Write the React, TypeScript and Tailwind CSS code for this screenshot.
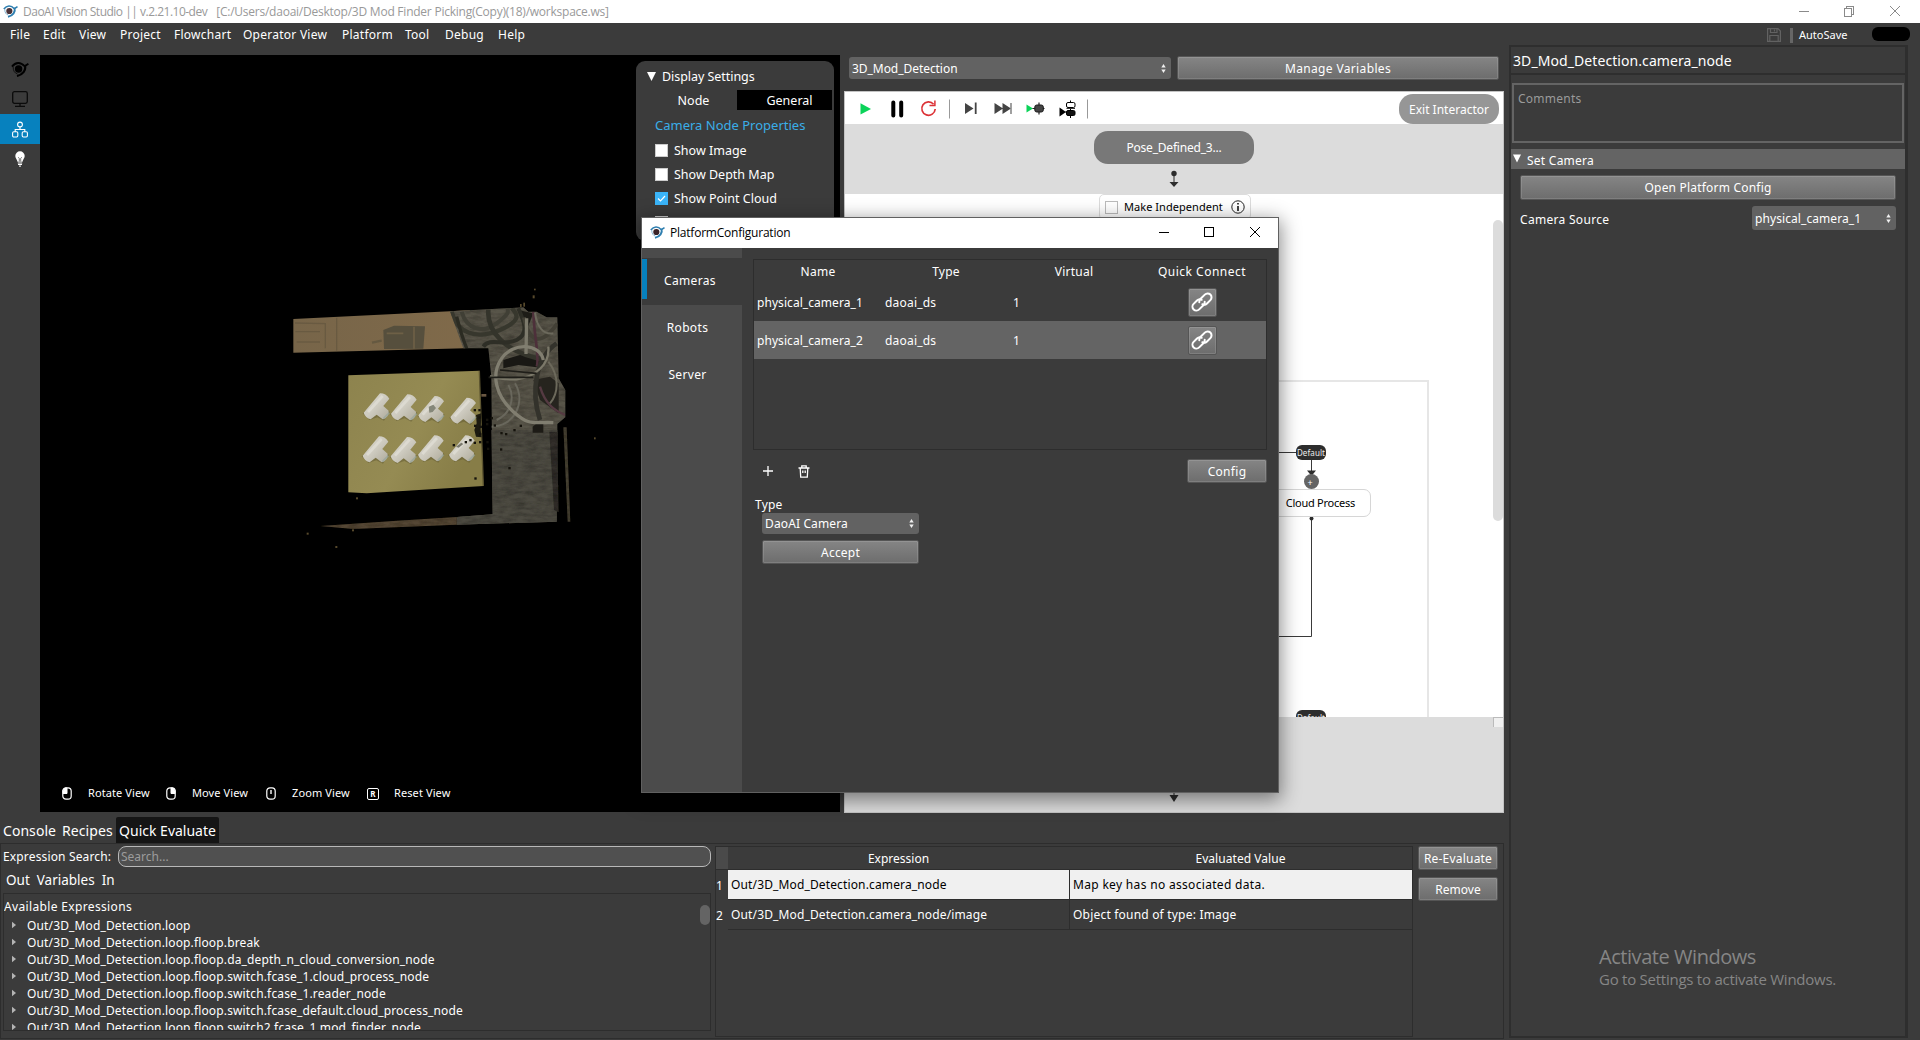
import type { ReactNode } from "react";

function Logo({ className, body, pupil }: { className: string; body: string; pupil: string }) {
  return (
    <svg viewBox="0 0 18 16" className={className} fill="none">
      <path d="M1 5.6C4.5 1 9.5.6 13.6 5.2L17.4 2.8" stroke={body} strokeWidth="1.9" />
      <path d="M13.8 4.2C15.4 9 12 13.6 6 15" stroke={body} strokeWidth="2.200" />
      <path d="M2.2 6C2 9.500 3.600 12.200 6.500 13" stroke={body} strokeWidth="1" opacity="0.700" />
      <circle cx="7.600" cy="8" r="3.700" fill={pupil} />
    </svg>
  );
}

function Button({ className, children }: { className: string; children: ReactNode }) {
  return (
    <button
      className={
        "flex shrink-0 items-center justify-center rounded-[2px] border border-[#555] bg-linear-to-b from-[#858585] to-[#6d6d6d] leading-none shadow-[inset_0_0_0_1px_rgba(255,255,255,0.12)] " +
        className
      }
    >
      {children}
    </button>
  );
}

function Spin() {
  return (
    <svg viewBox="0 0 5 9" className="h-[9px] w-[5px] shrink-0" fill="#f0f0f0">
      <path d="M2.5 0L4.700 3.500H.3z" />
      <path d="M2.500 9L4.700 5.500H.3z" />
    </svg>
  );
}

function Select({ className, children }: { className: string; children: ReactNode }) {
  return (
    <div className={"flex shrink-0 items-center justify-between rounded-[3px] bg-[#626262] pl-[3px] leading-none " + className}>
      <span className="pt-[1px]">{children}</span>
      <Spin />
    </div>
  );
}

const menus: [string, string][] = [
  ["File", "w-[33px]"],
  ["Edit", "w-[36px]"],
  ["View", "w-[41px]"],
  ["Project", "w-[54px]"],
  ["Flowchart", "w-[69px]"],
  ["Operator View", "w-[99px]"],
  ["Platform", "w-[63px]"],
  ["Tool", "w-[40px]"],
  ["Debug", "w-[53px]"],
  ["Help", "w-[40px]"],
];

function TitleBar() {
  return (
    <div className="flex h-[23px] shrink-0 items-center bg-white font-['Open_Sans',sans-serif] text-[12px] text-[#999]">
      <Logo className="ml-[3px] mb-[2px] h-[14px] w-[15px]" body="#2f7fb0" pupil="#4a3338" />
      <span className="ml-[5px] whitespace-pre tracking-[-0.500px]">DaoAI Vision Studio || v.2.21.10-dev</span>
      <span className="ml-[9px] whitespace-pre tracking-[-0.235px]">[C:/Users/daoai/Desktop/3D Mod Finder Picking(Copy)(18)/workspace.ws]</span>
      <svg viewBox="0 0 103 12" className="mr-[19px] mb-[2px] ml-auto h-[12px] w-[103px]" fill="none" stroke="#8a8a8a" shapeRendering="crispEdges">
        <path d="M1 6.500H11" />
        <path d="M46.500 3.500h7v8h-7zM48.500 3.500v-2h7v8h-2" />
        <path d="M92 1L102 11M102 1L92 11" shapeRendering="auto" />
      </svg>
    </div>
  );
}

function MenuBar() {
  return (
    <div className="flex h-[22px] shrink-0 items-center pt-[2px] pl-[10px] text-[12px] leading-[20px]">
      {menus.map(([m, w]) => (
        <span key={m} className={"shrink-0 whitespace-nowrap tracking-[0.250px] " + w}>{m}</span>
      ))}
      <svg viewBox="0 0 14 14" className="ml-auto h-[14px] w-[14px]" fill="none" stroke="#626262" strokeWidth="1.200">
        <path d="M.6.600H11L13.400 3V13.400H.6z" />
        <path d="M3.500.600V4.500H10V.6M2.800 13.400V7.500H11.200V13.400M7.500 1.500V3.500" />
      </svg>
      <div className="ml-[9px] h-[15px] w-[3px] bg-[#666]" />
      <span className="ml-[6px] w-[73px] text-[11px]">AutoSave</span>
      <div className="mr-[10px] mb-[2px] h-[14px] w-[38px] rounded-[6px] bg-black" />
    </div>
  );
}

function SideBar() {
  return (
    <div className="flex w-[40px] shrink-0 flex-col pt-[9px]">
      <div className="flex h-[30px] items-center justify-center">
        <Logo className="h-[16px] w-[18px]" body="#000" pupil="#000" />
      </div>
      <div className="flex h-[30px] items-center justify-center">
        <svg viewBox="0 0 16 16" className="h-[16px] w-[16px]" fill="none" stroke="#0b0b0b" strokeWidth="1.300">
          <rect x="0.700" y="0.700" width="14.600" height="11.600" rx="1.800" />
          <path d="M8 12.300V15M3 15.300H13" />
        </svg>
      </div>
      <div className="flex h-[30px] items-center justify-center bg-[#0781be]">
        <svg viewBox="0 0 16 16" className="h-[17px] w-[16px]" fill="none" stroke="#fff" strokeWidth="1.100">
          <circle cx="8" cy="3" r="2.400" />
          <path d="M8 5.400V8M3.200 10.500V8H12.800V10.500" />
          <rect x="0.600" y="10.300" width="5.200" height="5.200" rx="1.200" />
          <rect x="10.200" y="10.300" width="5.200" height="5.200" rx="1.200" />
        </svg>
      </div>
      <div className="flex h-[30px] items-center justify-center">
        <svg viewBox="0 0 10 16" className="h-[16px] w-[10px]">
          <path d="M5 .3a4.700 4.700 0 0 1 4.700 4.700C9.700 7.400 7.900 8.300 7.500 10.800H2.500C2.100 8.300.3 7.400.3 5A4.700 4.700 0 0 1 5 .3z" fill="#fff" />
          <path d="M3.300 6.200L4.300 7.500V10.500M6.700 6.200L5.700 7.500V10.500" stroke="#3b3b3b" strokeWidth="0.700" fill="none" />
          <path d="M2.800 12H7.200M3 13.500H7M4 15.100H6" stroke="#fff" strokeWidth="1" />
        </svg>
      </div>
    </div>
  );
}

const tees: [number, number][] = [
  [320, 380], [402, 383], [484, 388], [580, 393],
  [317, 509], [401, 511], [483, 506], [576, 506],
];

const specks: [number, number][] = [
  [628, 390], [614, 390], [628, 412], [615, 437], [632, 440], [630, 462], [651, 419], [651, 432],
  [652, 486], [654, 506], [665, 414], [674, 436], [694, 459], [708, 462], [733, 450], [752, 437], [693, 508], [718, 564],
  [551, 495], [587, 486], [601, 480], [614, 488], [630, 486], [616, 595],
];

function PointCloud() {
  return (
    <svg viewBox="0 0 1020 840" className="mt-[225px] ml-[230px] h-[280px] w-[340px]">
      <defs>
        <filter id="grain" x="0" y="0" width="100%" height="100%">
          <feTurbulence type="fractalNoise" baseFrequency="0.030 0.090" numOctaves="4" seed="4" result="n" />
          <feColorMatrix in="n" type="matrix" values="0 0 0 0 0  0 0 0 0 0  0 0 0 0 0  0 0 0 0.800 -0.260" result="d" />
          <feComposite in="d" in2="SourceGraphic" operator="in" result="c" />
          <feMerge>
            <feMergeNode in="SourceGraphic" />
            <feMergeNode in="c" />
          </feMerge>
        </filter>
        <linearGradient id="wall" x1="0" x2="1">
          <stop offset="0" stopColor="#776549" />
          <stop offset="1" stopColor="#806a4a" />
        </linearGradient>
        <linearGradient id="board" x1="0" x2="1" y2="0.500">
          <stop offset="0" stopColor="#8d834e" />
          <stop offset="0.600" stopColor="#958b53" />
          <stop offset="1" stopColor="#877d47" />
        </linearGradient>
        <linearGradient id="tee" x1="0" y1="0" x2="1" y2="1">
          <stop offset="0" stopColor="#d9d6cb" />
          <stop offset="0.500" stopColor="#cecbc0" />
          <stop offset="1" stopColor="#aeaa9a" />
        </linearGradient>
        <clipPath id="clutter">
          <path d="M540 94L760 82L775 95L800 95L830 112H862L866 295L886 330V412L860 435L850 480L655 480V205H580z" />
        </clipPath>
      </defs>
      <path d="M70 117L540 94L600 90L585 205L70 218z" fill="url(#wall)" />
      <path d="M200 113V212M75 129L166 131V205M76 155H150M80 186H150" stroke="#62563f" strokeWidth="4" fill="none" opacity="0.700" />
      <path d="M340 150L372 137L465 139L460 206L342 207z" fill="#564f3d" />
      <path d="M350 160H400M432 140V206" stroke="#6e6046" strokeWidth="5" fill="none" />
      <path d="M306 188L335 182" stroke="#655941" strokeWidth="7" />
      <g filter="url(#grain)">
        <path d="M540 94L760 82L775 95L800 95L830 112H862L866 295L886 330V412L862 432L860 725L560 734V711L668 703L664 290L655 205H580z" fill="#58554a" />
        <path d="M664 450H862L860 725L560 734V711L668 703z" fill="#4e4c43" />
        <path d="M838 455H862L866 697L852 690z" fill="#302f29" />
        <path d="M150 738L380 722L560 711V734L250 747z" fill="#544735" />
        <path d="M880 442H890L901 725H893z" fill="#453f32" />
      </g>
      <g clipPath="url(#clutter)" fill="none">
        <path d="M700 240L760 222L815 245L800 262L745 255L700 265z" fill="#191814" />
        <path d="M790 300L840 290L866 310V400L810 360z" fill="#26241e" />
        <path d="M745 90L790 100L770 150z" fill="#1d1c17" />
        <path d="M800 430H820V458H788V440z" fill="#1d1b16" />
        <path d="M545 95C560 160 620 180 690 150S740 100 725 84" stroke="#37372d" strokeWidth="13" />
        <path d="M575 95C590 150 640 160 680 130S715 95 712 84" stroke="#403f35" strokeWidth="12" />
        <path d="M655 88C650 150 700 220 830 240" stroke="#34342b" strokeWidth="14" />
        <path d="M640 200C660 170 700 200 740 180S760 120 745 85" stroke="#2e2e26" strokeWidth="12" />
        <path d="M560 110C570 150 580 180 590 205" stroke="#2b2b22" strokeWidth="10" />
        <path d="M762 112C780 200 820 190 862 130" stroke="#434036" strokeWidth="12" />
        <path d="M790 95C790 150 810 240 800 260" stroke="#4d303a" strokeWidth="8" />
        <path d="M810 320C825 370 850 390 886 405" stroke="#553a42" strokeWidth="7" />
        <path d="M770 115L768 222" stroke="#7d7a6c" strokeWidth="10" />
        <path d="M795 98C800 140 820 165 850 160" stroke="#6c695c" strokeWidth="6" />
        <path d="M860 190C800 230 780 330 810 420" stroke="#33322b" strokeWidth="14" />
        <path d="M665 440C730 440 770 370 735 310M680 420C725 400 735 350 715 315" stroke="#69675c" strokeWidth="6" />
        <path d="M835 200C840 250 800 290 740 298C700 300 680 295 660 288" stroke="#7b7869" strokeWidth="7" />
        <path d="M820 240C810 190 730 185 695 235S680 350 730 395S790 425 850 428" stroke="#817e70" strokeWidth="10" />
        <path d="M835 245C870 290 865 340 840 370" stroke="#6c695b" strokeWidth="6" />
        <path d="M655 292H790M690 270L800 280" stroke="#1f1e19" strokeWidth="5" />
      </g>
      <path d="M235 286L628 272L640 618L290 640L235 637z" fill="url(#board)" />
      <path d="M628 272L640 618" stroke="#5d5530" strokeWidth="4" />
      <path d="M634 342L649 342V350H634z" fill="#6a5742" />
      <path d="M618 405L634 400L632 450L635 472L618 470L613 450L620 430z" fill="#1c1a10" />
      {tees.map(([x, y]) => (
        <g key={x + "-" + y} transform={"translate(" + x + " " + y + ")"}>
          <path d="M-42 20L-22 40L2 32L22 42L40 16L20 0L30 -30L6 -24z" fill="#5f5730" opacity="0.500" />
          <path d="M-39 18L10 -40Q28 -40 38 -24L20 -2L36 12Q38 32 18 38L0 24L-18 38Q-34 34 -39 18z" fill="url(#tee)" />
          <path d="M-26 16L18 -32" stroke="#e6e4dc" strokeWidth="8" opacity="0.600" />
          <path d="M20 36L38 18" stroke="#97a59b" strokeWidth="5" opacity="0.700" />
        </g>
      ))}
      <path d="M476 380L490 374L498 384L488 396L478 398z" fill="#858779" />
      <path d="M558 500L574 488L580 492L566 503z" fill="#77776b" />
      {specks.map(([x, y]) => (
        <rect key={x + "." + y} x={x - 3} y={y - 3} width="7" height="7" fill="#15130c" />
      ))}
      <g fill="#57492c">
        <rect x="110" y="758" width="6" height="6" />
        <rect x="196" y="798" width="6" height="6" />
        <rect x="258" y="652" width="6" height="6" />
        <rect x="246" y="748" width="6" height="6" />
        <rect x="792" y="26" width="5" height="5" />
        <rect x="788" y="46" width="6" height="9" />
        <rect x="750" y="72" width="5" height="9" />
        <rect x="760" y="68" width="5" height="12" />
        <rect x="972" y="472" width="5" height="6" />
      </g>
    </svg>
  );
}

function Mouse({ button }: { button: "left" | "right" | "wheel" }) {
  return (
    <svg viewBox="0 0 10 13" className="h-[13px] w-[10px]" fill="none" stroke="#fff">
      <rect x="0.800" y="0.800" width="8.400" height="11.400" rx="3.200" strokeWidth="1.200" />
      {button === "left" && <path d="M1 6.500V3.500L3 1H5V6.500z" fill="#fff" />}
      {button === "right" && <path d="M9 6.500V3.500L7 1H5V6.500z" fill="#fff" />}
      {button === "wheel" && <path d="M5 3V7" strokeWidth="1.400" />}
    </svg>
  );
}

function Check({ label, on }: { label: string; on?: boolean }) {
  return (
    <div className="flex h-[24px] shrink-0 items-center pl-[19px]">
      <div className={"mb-[2px] flex h-[13px] w-[13px] items-center justify-center " + (on ? "bg-[#3ab4f8]" : "border border-[#ccc] bg-white")}>
        {on && (
          <svg viewBox="0 0 9 7" className="h-[7px] w-[9px]" fill="none" stroke="#fff" strokeWidth="1.200">
            <path d="M1 3.500L3.500 6L8 1" />
          </svg>
        )}
      </div>
      <span className="ml-[6px]">{label}</span>
    </div>
  );
}

function Viewport() {
  return (
    <div className="relative flex h-[757px] w-[800px] shrink-0 flex-col bg-black">
      <PointCloud />
      <div className="mt-auto flex h-[36px] items-center pb-[1px] text-[11px] tracking-[0.100px]">
        <div className="ml-[22px] w-[26px]"><Mouse button="left" /></div>
        <span className="w-[78px]">Rotate View</span>
        <div className="w-[26px]"><Mouse button="right" /></div>
        <span className="w-[74px]">Move View</span>
        <div className="w-[26px]"><Mouse button="wheel" /></div>
        <span className="w-[75px]">Zoom View</span>
        <div className="w-[27px]">
          <div className="flex h-[12px] w-[12px] items-center justify-center rounded-[2px] border border-white text-[8px] font-bold leading-none">R</div>
        </div>
        <span>Reset View</span>
      </div>
      <div className="absolute top-[6px] left-[596px] flex h-[180px] w-[198px] flex-col overflow-hidden rounded-[9px] bg-[#3b3b3b] text-[12.500px]">
        <div className="mt-[3px] flex h-[25px] items-center pt-[1px] pl-[11px]">
          <svg viewBox="0 0 9 9" className="mb-[1px] h-[9px] w-[9px]" fill="#fff"><path d="M0 0H9L4.500 9z" /></svg>
          <span className="ml-[6px] tracking-[-0.050px]">Display Settings</span>
        </div>
        <div className="mt-[1px] flex h-[20px] items-center">
          <span className="flex w-[101px] justify-center pt-[2px] pl-[14px]">Node</span>
          <span className="flex h-[20px] w-[95px] items-center justify-center bg-black pt-[2px] pl-[10px]">General</span>
        </div>
        <span className="mt-[3px] h-[24px] pl-[19px] text-[13px] leading-[24px] text-[#3aaee8]">Camera Node Properties</span>
        <div className="flex flex-col pt-[2px]">
          <Check label="Show Image" />
          <Check label="Show Depth Map" />
          <Check label="Show Point Cloud" on />
          <Check label="Show Bounding Box" />
        </div>
      </div>
    </div>
  );
}

function Toolbar() {
  return (
    <div className="flex h-[32px] shrink-0 items-center bg-white">
      <svg viewBox="0 0 250 32" className="mb-[1px] h-[32px] w-[250px]" fill="none">
        <path d="M15.500 11.300L26 17L15.500 22.500z" fill="#0bd359" />
        <path d="M48.300 10.500V23.500M56.200 10.500V23.500" stroke="#000" strokeWidth="4" strokeLinecap="round" />
        <path d="M88.600 12.200A6.700 6.700 0 1 0 90.200 17" stroke="#dc3236" strokeWidth="1.700" />
        <path d="M89.900 8.500V13.500H84.500" stroke="#dc3236" strokeWidth="1.500" />
        <path d="M104.500 7.500V26.500M242.500 7.500V26.500" stroke="#999" />
        <path d="M120 11V22L128.500 16.500z" fill="#444" />
        <path d="M130.700 10.500V22" stroke="#444" strokeWidth="1.800" />
        <path d="M149.500 11V22L158 16.500zM157.500 11V22L166 16.500z" fill="#444" />
        <path d="M166 11V22" stroke="#777" strokeWidth="1.400" />
        <path d="M181.500 12.500V20.500L188 16.500z" fill="#0bd359" />
        <path d="M187.500 16.500H199.500M194 10.500V22.500" stroke="#222" strokeWidth="1.200" />
        <rect x="189.800" y="13" width="8.500" height="7" rx="2" fill="#444" stroke="#1a1a1a" />
        <path d="M214.500 15.500V24.500L221 20z" fill="#000" />
        <path d="M225.500 8.500V26" stroke="#000" />
        <rect x="221.500" y="10.500" width="8.500" height="5" rx="1.500" fill="#fff" stroke="#000" />
        <path d="M219.500 20H224M221.500 16.500H230" stroke="#333" />
        <rect x="221.500" y="18.500" width="8.500" height="5" rx="1.500" fill="#111" stroke="#000" />
      </svg>
      <div className="mt-[1px] mr-[4px] ml-auto flex h-[30px] w-[100px] items-center justify-center rounded-[14px] bg-[#969696] pt-[3px] text-[12px] text-white">
        Exit Interactor
      </div>
    </div>
  );
}

function Flowchart() {
  return (
    <div className="flex h-[722px] w-[660px] shrink-0 flex-col overflow-hidden border border-[#c3c3c3] bg-[#dcdcdc] text-[#111]">
      <Toolbar />
      <div className="flex h-[70px] shrink-0 flex-col items-center pt-[7px]">
        <div className="flex h-[33px] w-[160px] items-center justify-center rounded-[14px] bg-[#787878] pt-[1px] text-[12px] tracking-[-0.200px] text-white">Pose_Defined_3...</div>
        <svg viewBox="0 0 10 18" className="mt-[6px] h-[18px] w-[10px]" fill="#2d2d2d">
          <circle cx="5" cy="3.500" r="2.700" />
          <path d="M4.500 3H5.500V13H4.500zM.5 12H9.500L5 17z" />
        </svg>
      </div>
      <div className="relative h-[523px] shrink-0 overflow-hidden bg-white">
        <div className="absolute top-[0px] left-[254px] flex h-[26px] w-[152px] items-center rounded-[5px] border border-[#dcdcdc] bg-white pl-[5px] text-[11px]">
          <div className="h-[13px] w-[13px] border border-[#bbb]" />
          <span className="ml-[6px] w-[107px] whitespace-nowrap tracking-[0.050px] text-black">Make Independent</span>
          <svg viewBox="0 0 14 14" className="h-[14px] w-[14px] shrink-0" fill="none" stroke="#222">
            <circle cx="7" cy="7" r="6.200" />
            <path d="M7 3V4.600M7 6V11" strokeWidth="1.700" />
          </svg>
        </div>
        <div className="absolute top-[186px] left-[100px] h-[400px] w-[484px] border-2 border-[#e6e6e6]" />
        <svg viewBox="0 0 200 280" className="absolute top-[244px] left-[350px] h-[280px] w-[200px]" fill="none" stroke="#3a3a3a">
          <path d="M0 14.500H102M116.500 22V38M116.500 81V198.500H0" />
          <path d="M112 32.500H121L116.500 38z" fill="#2d2d2d" stroke="none" />
          <circle cx="116.500" cy="80.500" r="2" fill="#2d2d2d" stroke="none" />
        </svg>
        <div className="absolute top-[251px] left-[451px] flex h-[15px] w-[30px] items-center justify-center rounded-[6px] bg-[#2d2d2d] pt-[1px] text-[8px] tracking-[0.100px] text-[#eee]">Default</div>
        <div className="absolute top-[280px] left-[459px] flex h-[15px] w-[15px] items-center justify-center rounded-full bg-[#646464] pt-[1px] pr-[3px] text-[9px] leading-none text-white">+</div>
        <div className="absolute top-[295px] left-[370px] flex h-[28px] w-[156px] items-center justify-end rounded-[7px] border border-[#d6d6d6] bg-white pr-[15px] text-[11px] tracking-[-0.250px] text-black">Cloud Process</div>
        <div className="absolute top-[516px] left-[451px] flex h-[15px] w-[30px] items-center justify-center rounded-[6px] bg-[#2d2d2d] text-[8px] tracking-[0.100px] text-[#eee]">Default</div>
        <div className="absolute top-[26px] right-[0px] h-[301px] w-[10px] rounded-[5px] bg-[#dcdcdc]" />
      </div>
      <div className="flex h-[10px] shrink-0 justify-end">
        <div className="h-[10px] w-[10px] border-t border-l border-[#bbb] bg-[#f0f0f0]" />
      </div>
      <div className="mt-auto flex justify-center">
        <svg viewBox="0 0 10 40" className="mb-[9px] h-[40px] w-[10px]" fill="#2d2d2d">
          <path d="M4.500 0H5.500V34H4.500zM.5 32H9.500L5 39z" />
        </svg>
      </div>
    </div>
  );
}

function CenterColumn() {
  return (
    <div className="ml-[4px] flex w-[665px] shrink-0 flex-col text-[12px]">
      <div className="flex h-[36px] shrink-0 items-start pt-[1px] pl-[5px]">
        <Select className="mt-[1px] h-[22px] w-[322px] pr-[5px]"><span className="tracking-[-0.050px]">3D_Mod_Detection</span></Select>
        <Button className="ml-[6px] h-[24px] w-[322px]"><span className="pt-[1px] tracking-[0.350px]">Manage Variables</span></Button>
      </div>
      <Flowchart />
    </div>
  );
}

const expressions = [
  "Out/3D_Mod_Detection.loop",
  "Out/3D_Mod_Detection.loop.floop.break",
  "Out/3D_Mod_Detection.loop.floop.da_depth_n_cloud_conversion_node",
  "Out/3D_Mod_Detection.loop.floop.switch.fcase_1.cloud_process_node",
  "Out/3D_Mod_Detection.loop.floop.switch.fcase_1.reader_node",
  "Out/3D_Mod_Detection.loop.floop.switch.fcase_default.cloud_process_node",
  "Out/3D_Mod_Detection.loop.floop.switch2.fcase_1.mod_finder_node",
];

function BottomPanel() {
  return (
    <div className="flex h-[227px] w-[1509px] shrink-0 flex-col pt-[4px]">
      <div className="flex h-[26px] shrink-0 items-center text-[14px]">
        <span className="ml-[3px] w-[59px] tracking-[0.050px]">Console</span>
        <span className="w-[54px] tracking-[0.100px]">Recipes</span>
        <span className="flex h-[26px] w-[103px] items-center justify-center rounded-t-[2px] bg-[#151515]">Quick Evaluate</span>
      </div>
      <div className="flex h-[196px] w-[1504px] border border-[#2d2d2d] text-[12px]">
        <div className="flex w-[711px] shrink-0 flex-col pl-[2px]">
          <div className="mt-[2px] flex h-[21px] shrink-0 items-center">
            <span className="w-[115px] pt-[1px] tracking-[0.150px]">Expression Search:</span>
            <div className="flex h-[21px] w-[593px] items-center rounded-[8px] border border-[#b8b8b8] bg-[#505050] pl-[2px] text-[#9c9c9c]">Search...</div>
          </div>
          <div className="flex h-[26px] shrink-0 items-center gap-[7px] pt-[1px] pl-[3px] text-[13.500px]">
            <span>Out</span>
            <span>Variables</span>
            <span>In</span>
          </div>
          <div className="flex h-[138px] w-[708px] shrink-0 justify-between overflow-hidden border border-[#2d2d2d]">
            <div className="flex flex-col pt-[3px]">
              <span className="flex h-[20px] shrink-0 items-center tracking-[0.350px]">Available Expressions</span>
              {expressions.map((e) => (
                <div key={e} className="flex h-[17px] shrink-0 items-center pl-[8px]">
                  <svg viewBox="0 0 5 8" className="mb-[2px] h-[8px] w-[4px]" fill="#b4b4b4"><path d="M0 0L5 4L0 8z" /></svg>
                  <span className="ml-[11px] leading-none tracking-[0.140px]">{e}</span>
                </div>
              ))}
            </div>
            <div className="mt-[11px] h-[20px] w-[10px] rounded-[5px] bg-[#646464]" />
          </div>
        </div>
        <div className="mt-[2px] ml-[3px] flex h-[191px] w-[698px] shrink-0 flex-col border border-[#2d2d2d]">
          <div className="flex h-[23px] shrink-0 items-center border-b border-[#2d2d2d]">
            <div className="h-[22px] w-[12px] bg-[#4a4a4a]" />
            <span className="flex w-[342px] justify-center pt-[2px] pr-[1px]">Expression</span>
            <span className="flex w-[341px] justify-center pt-[2px] tracking-[0.050px]">Evaluated Value</span>
          </div>
          {[
            ["Out/3D_Mod_Detection.camera_node", "Map key has no associated data."],
            ["Out/3D_Mod_Detection.camera_node/image", "Object found of type: Image"],
          ].map(([a, b], i) => (
            <div key={a} className="flex h-[30px] shrink-0 items-stretch">
              <span className="flex w-[12px] items-center pt-[2px]">{i + 1}</span>
              <div className={"flex flex-1 border-b border-[#2d2d2d] tracking-[0.140px] " + (i === 0 ? "bg-[#f0f0f0] text-black" : "")}>
                <span className="flex w-[342px] items-center border-r border-[#2d2d2d] pt-[1px] pl-[3px]">{a}</span>
                <span className={"flex flex-1 items-center pt-[1px] pl-[3px] " + (i === 0 ? "tracking-[0.320px]" : "tracking-[0.200px]")}>{b}</span>
              </div>
            </div>
          ))}
        </div>
        <div className="flex flex-col gap-[7px] pt-[2px] pl-[5px]">
          <Button className="h-[24px] w-[80px]"><span className="pt-[1px] tracking-[0.200px]">Re-Evaluate</span></Button>
          <Button className="h-[24px] w-[80px]"><span className="pt-[1px]">Remove</span></Button>
        </div>
      </div>
    </div>
  );
}

function RightPanel() {
  return (
    <div className="flex h-[995px] w-[411px] shrink-0 pr-[12px]">
      <div className="flex h-[993px] w-[399px] flex-col border-2 border-r-3 border-[#2e2e2e] text-[12px]">
        <div className="flex h-[28px] shrink-0 items-center border-b-2 border-[#2e2e2e] pt-[1px] pl-[2px] text-[14px] tracking-[0.080px]">3D_Mod_Detection.camera_node</div>
        <div className="mt-[8px] ml-[1px] h-[60px] w-[392px] shrink-0 border-2 border-[#646464] pt-[5px] pl-[4px] leading-[18px] tracking-[0.250px] text-[#9a9a9a]">Comments</div>
        <div className="mt-[6px] flex h-[20px] w-[394px] shrink-0 items-center bg-[#646464] pl-[2px]">
          <svg viewBox="0 0 9 9" className="mb-[1px] h-[9px] w-[8px]" fill="#fff"><path d="M0 0H9L4.500 9z" /></svg>
          <span className="ml-[6px] pt-[3px] tracking-[0.250px]">Set Camera</span>
        </div>
        <Button className="mt-[6px] ml-[9px] h-[25px] w-[376px]"><span className="pt-[1px] tracking-[0.200px]">Open Platform Config</span></Button>
        <div className="mt-[6px] flex h-[24px] shrink-0 items-center pl-[9px]">
          <span className="w-[232px] pt-[3px] tracking-[0.300px]">Camera Source</span>
          <Select className="h-[24px] w-[144px] pr-[5px]"><span className="tracking-[0.080px]">physical_camera_1</span></Select>
        </div>
        <div className="mt-auto mb-[46px] ml-[88px] flex flex-col font-['Open_Sans',sans-serif] text-[#868686]">
          <span className="text-[20px] leading-[24px] tracking-[-0.450px]">Activate Windows</span>
          <span className="text-[15px] leading-[21px] tracking-[-0.250px]">Go to Settings to activate Windows.</span>
        </div>
      </div>
    </div>
  );
}

function LinkIcon() {
  return (
    <svg viewBox="0 0 24 24" className="h-[24px] w-[24px] shrink-0" fill="none" stroke="#fff" strokeWidth="2" strokeLinecap="round">
      <path d="M9.300 12.200C9 10.800 9.500 9.900 10.400 9L14.800 4.600A3.900 3.900 0 0 1 20.400 10.100L17 13.500C15.600 14.900 13.800 15 12.300 14.200" />
      <path d="M14.700 11.800C15 13.200 14.500 14.100 13.600 15L9.200 19.400A3.900 3.900 0 0 1 3.600 13.900L7 10.500C8.400 9.100 10.200 9 11.700 9.800" />
    </svg>
  );
}

function Dialog() {
  return (
    <div className="absolute top-[217px] left-[641px] flex h-[576px] w-[638px] flex-col border border-[#606060] bg-[#3b3b3b] text-[12px] shadow-[0_5px_18px_2px_rgba(0,0,0,0.450)]">
      <div className="flex h-[30px] shrink-0 items-center bg-white text-black">
        <Logo className="mb-[2px] ml-[8px] h-[14px] w-[15px]" body="#2f7fb0" pupil="#3a2226" />
        <span className="ml-[5px] font-['Open_Sans',sans-serif] tracking-[-0.220px]">PlatformConfiguration</span>
        <svg viewBox="0 0 102 12" className="mr-[17px] mb-[2px] ml-auto h-[12px] w-[102px]" fill="none" stroke="#000">
          <path d="M0 6.500H10M45.500 1.500h9v9h-9z" shapeRendering="crispEdges" />
          <path d="M91 1L101 11M101 1L91 11" />
        </svg>
      </div>
      <div className="flex min-h-0 flex-1">
        <div className="flex w-[100px] shrink-0 flex-col bg-[#4b4b4b] pt-[10px] tracking-[0.350px]">
          <div className="flex h-[47px] bg-[#3b3b3b]">
            <div className="mt-[1px] h-[40px] w-[5px] bg-[#0781be]" />
            <span className="flex h-[47px] w-[86px] items-center justify-center pb-[2px]">Cameras</span>
          </div>
          <span className="flex h-[47px] w-[91px] items-center justify-center pb-[2px]">Robots</span>
          <span className="flex h-[47px] w-[91px] items-center justify-center pb-[2px]">Server</span>
        </div>
        <div className="flex flex-1 flex-col pt-[11px] pl-[11px]">
          <div className="flex h-[191px] w-[514px] flex-col border border-[#2d2d2d]">
            <div className="grid h-[23px] shrink-0 grid-cols-4 items-center text-center tracking-[0.250px]">
              <span className="pt-[1px]">Name</span>
              <span className="pt-[1px]">Type</span>
              <span className="pt-[1px]">Virtual</span>
              <span className="pt-[1px] tracking-[0.500px]">Quick Connect</span>
            </div>
            {["physical_camera_1", "physical_camera_2"].map((n, i) => (
              <div key={n} className={"grid h-[38px] shrink-0 grid-cols-4 items-center " + (i === 1 ? "bg-[#646464]" : "")}>
                <span className="pt-[2px] pl-[3px] tracking-[0.060px]">{n}</span>
                <span className="pt-[2px] pl-[3px] tracking-[0.200px]">daoai_ds</span>
                <span className="pt-[2px] pl-[3px]">1</span>
                <div className="flex justify-center">
                  <Button className="h-[29px] w-[29px]"><LinkIcon /></Button>
                </div>
              </div>
            ))}
          </div>
          <div className="mt-[9px] flex h-[24px] items-center pl-[10px]">
            <svg viewBox="0 0 10 10" className="h-[10px] w-[10px]" stroke="#fff" strokeWidth="1.300"><path d="M5 0V10M0 5H10" /></svg>
            <svg viewBox="0 0 12 13" className="ml-[25px] h-[13px] w-[12px]" fill="none" stroke="#fff" strokeWidth="1.300">
              <path d="M.5 3H11.500M3.800 3V.900H8.200V3M2.200 3L2.700 12.200H9.300L9.800 3M4.800 5.500V8M7.200 5.500V8" />
            </svg>
            <Button className="ml-auto mr-[11px] h-[24px] w-[80px]"><span className="pt-[1px] tracking-[0.300px]">Config</span></Button>
          </div>
          <span className="mt-[13px] h-[18px] pl-[2px] leading-[18px] tracking-[0.200px]">Type</span>
          <Select className="-mt-[1px] ml-[9px] h-[21px] w-[157px] pr-[5px]"><span className="tracking-[0.130px]">DaoAI Camera</span></Select>
          <Button className="mt-[6px] ml-[9px] h-[24px] w-[157px]"><span className="pt-[2px] tracking-[0.200px]">Accept</span></Button>
        </div>
      </div>
    </div>
  );
}

export default function App() {
  return (
    <div className="relative flex h-[1040px] w-[1920px] flex-col overflow-hidden bg-[#3b3b3b] font-['Noto_Sans',sans-serif] text-white">
      <TitleBar />
      <MenuBar />
      <div className="flex h-[995px]">
        <div className="flex w-[1509px] shrink-0 flex-col">
          <div className="flex h-[768px] shrink-0">
            <div className="flex w-[840px] shrink-0">
              <SideBar />
              <div className="pt-[10px]"><Viewport /></div>
            </div>
            <div className="flex pt-[10px]"><CenterColumn /></div>
          </div>
          <BottomPanel />
        </div>
        <RightPanel />
      </div>
      <Dialog />
    </div>
  );
}
